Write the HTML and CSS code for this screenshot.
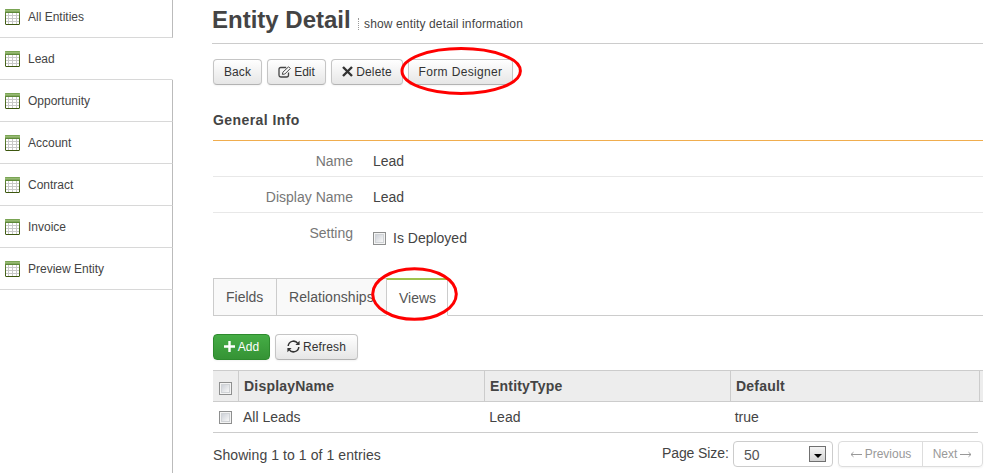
FILE: index.html
```
<!DOCTYPE html>
<html lang="en">
<head>
<meta charset="utf-8">
<title>Entity Detail</title>
<link rel="stylesheet" href="styles.css">
</head>
<body>
<svg class="defs" width="0" height="0">
  <defs>
    <linearGradient id="bar" x1="0" y1="0" x2="0" y2="1"><stop offset="0" stop-color="#6b9a45"/><stop offset=".45" stop-color="#9fc07c"/><stop offset="1" stop-color="#4c7a26"/></linearGradient>
    <linearGradient id="frame" x1="0" y1="0" x2="0" y2="1"><stop offset="0" stop-color="#6f9448"/><stop offset="1" stop-color="#3c560e"/></linearGradient>
    <symbol id="grid" viewBox="0 0 15 16">
      <rect x=".5" y=".5" width="14" height="15" rx=".5" fill="#fff" stroke="url(#frame)"/>
      <path d="M1 6.5H14M1 9.5H14M1 12.5H14M3.5 4V15M7.5 4V15M11.5 4V15" stroke="#c9c9c9" fill="none"/>
      <rect width="15" height="4" rx=".7" fill="url(#bar)"/>
    </symbol>
  </defs>
</svg>
<div class="page">
  <nav class="sidebar">
    <a class="item first"><svg class="grid-icon"><use href="#grid"/></svg>All Entities</a>
    <a class="item active"><svg class="grid-icon"><use href="#grid"/></svg>Lead</a>
    <a class="item"><svg class="grid-icon"><use href="#grid"/></svg>Opportunity</a>
    <a class="item"><svg class="grid-icon"><use href="#grid"/></svg>Account</a>
    <a class="item"><svg class="grid-icon"><use href="#grid"/></svg>Contract</a>
    <a class="item"><svg class="grid-icon"><use href="#grid"/></svg>Invoice</a>
    <a class="item"><svg class="grid-icon"><use href="#grid"/></svg>Preview Entity</a>
    <div class="rest"></div>
  </nav>
  <main class="main">
    <header class="title"><h1>Entity Detail</h1><small>show entity detail information</small></header>
    <div class="toolbar">
      <button class="btn back">Back</button>
      <button class="btn edit"><svg width="13" height="12" viewBox="0 0 13 12" fill="none" stroke="#444"><path d="M8.2 1.5H2.8Q1 1.5 1 3.2V9.2Q1 11 2.8 11H8.6Q10.5 11 10.5 9.2V6.6" stroke-width="1.3"/><path d="M4.4 8.4L4.9 6.2L10.6 .8L12.3 2.5L6.8 8Z" stroke-width="1" fill="#fff"/></svg>Edit</button>
      <button class="btn delete"><svg width="11" height="11" viewBox="0 0 11 11"><path d="M1 1L10 10M10 1L1 10" stroke="#333" stroke-width="2.4"/></svg>Delete</button>
      <div class="marked"><button class="btn designer">Form Designer</button><svg class="ring ring-designer" viewBox="0 0 122 48"><ellipse cx="61.2" cy="24" rx="59.2" ry="22.5"/></svg></div>
    </div>
    <h2>General Info</h2>
    <div class="info">
      <div class="row"><label>Name</label><span>Lead</span></div>
      <div class="row"><label>Display Name</label><span>Lead</span></div>
      <div class="row setting"><label>Setting</label><div class="check"><i class="box"></i><span>Is Deployed</span></div></div>
    </div>
    <div class="tabs">
      <a class="tab fields">Fields</a><a class="tab relations">Relationships</a><a class="tab views"><span>Views</span><svg class="ring ring-views" viewBox="0 0 88 54"><ellipse cx="44.5" cy="27" rx="41.8" ry="25.3"/></svg></a>
    </div>
    <div class="toolbar actions">
      <button class="btn add"><svg width="11" height="11" viewBox="0 0 11 11"><path d="M5.5 0V11M0 5.5H11" stroke="#fff" stroke-width="2.4"/></svg>Add</button>
      <button class="btn refresh"><svg width="13" height="13" viewBox="0 0 13 13"><path d="M1.2 6A5.3 5.3 0 0 1 10.8 3.4M11.8 7A5.3 5.3 0 0 1 2.2 9.6" fill="none" stroke="#333" stroke-width="1.5"/><path d="M12.6 .8V5H8.4ZM.4 12.2V8H4.6Z" fill="#333"/></svg>Refresh</button>
    </div>
    <div class="table">
      <div class="thead"><span class="cell pick"><i class="box"></i></span><span class="cell">DisplayName</span><span class="cell">EntityType</span><span class="cell last">Default</span></div>
      <div class="trow"><span class="cell pick"><i class="box"></i></span><span class="cell">All Leads</span><span class="cell">Lead</span><span class="cell last">true</span></div>
    </div>
    <footer class="footer">
      <span class="showing">Showing 1 to 1 of 1 entries</span>
      <span class="size">Page Size:</span>
      <div class="select"><span>50</span><i class="drop"></i></div>
      <div class="pager"><a class="prev"><svg width="12" height="7" viewBox="0 0 12 7"><path d="M12 3.5H1M3.5 1.2L1 3.5L3.5 5.8"/></svg><span>Previous</span></a><a class="next"><span>Next</span><svg width="12" height="7" viewBox="0 0 12 7"><path d="M0 3.5H11M8.5 1.2L11 3.5L8.5 5.8"/></svg></a></div>
    </footer>
  </main>
</div>
</body>
</html>
```
FILE: styles.css
```
* { box-sizing: border-box; }
body { margin: 0; background: #fff; color: #444; font: 14px/20px "Liberation Sans", Arial, sans-serif; overflow: hidden; }
.defs { display: block; height: 0; }
.page { display: flex; height: 473px; }
.sidebar { width: 173px; display: flex; flex-direction: column; flex: none; }
.item { height: 42px; display: flex; align-items: center; padding: 0 0 0 5px; border-bottom: 1px solid #d8d8d8; border-right: 1px solid #bbb; font-size: 12px; line-height: 16px; }
.first { height: 38px; padding-bottom: 3px; }
.item.active { border-right-color: transparent; }
.grid-icon { width: 15px; height: 16px; margin-right: 8px; flex: none; }
.rest { flex: 1; border-right: 1px solid #bbb; }
.main { width: 771px; margin-left: 39px; }
.title { height: 44px; border-bottom: 1px solid #ccc; display: flex; }
h1 { margin: 0; font-size: 24px; line-height: 40px; width: 146px; white-space: nowrap; }
small { font-size: 12px; height: 12px; margin-top: 18px; padding-left: 5px; border-left: 1px dotted #999; line-height: 12px; letter-spacing: .14px; white-space: nowrap; }
.toolbar { display: flex; gap: 5px; margin: 15px 0 0 1px; height: 27px; }
.btn { height: 26px; padding: 0; margin: 0; display: flex; align-items: center; justify-content: center; gap: 3px; font: 12px/16px "Liberation Sans", Arial, sans-serif; color: #333; border: 1px solid #c5c5c5; border-bottom-color: #b3b3b3; border-radius: 4px; background: linear-gradient(#fff, #e6e6e6); box-shadow: 0 1px 2px rgba(0,0,0,.05); white-space: nowrap; }
.back { width: 49px; letter-spacing: .1px; }
.edit { width: 59px; }
.delete { width: 72px; letter-spacing: .15px; }
.btn svg { margin-bottom: 1px; }
.designer { width: 105px; letter-spacing: .35px; }
.marked { position: relative; }
.ring { position: absolute; fill: none; stroke: #f00; stroke-width: 3; z-index: 2; overflow: visible; }
.ring-designer { width: 122px; height: 48px; left: -8px; top: -12px; }
h2 { margin: 24px 0 0 1px; font-size: 14px; line-height: 21px; height: 31px; border-bottom: 1px solid #f0ad4e; letter-spacing: .42px; }
.info { margin-left: 1px; }
.row { height: 36px; display: flex; border-bottom: 1px solid #e8e8e8; line-height: 40px; }
.row label { width: 140px; text-align: right; color: #777; margin-right: 20px; }
.setting { height: 65px; border: 0; }
.check { display: flex; gap: 7px; height: 20px; line-height: 20px; margin-top: 15px; align-items: center; }
.box { display: block; width: 13px; height: 13px; border: 1px solid #8e8f8f; background: linear-gradient(135deg, #c2c7d0, #f6f6f6 80%); box-shadow: inset 0 0 0 1px #f4f4f4, inset 0 0 0 2px #d0d3d6; flex: none; }
.tabs { margin-left: 1px; height: 38px; display: flex; background: linear-gradient(#ccc, #ccc) bottom / 100% 1px no-repeat; }
.tab { height: 38px; border: 1px solid #ccc; border-right: 0; background: #f9f9f9; color: #555; line-height: 37px; padding-left: 12px; }
.fields { width: 63px; }
.relations { width: 110px; letter-spacing: .05px; }
.tab.views { width: 62px; background: #fff; border-right: 1px solid #ccc; border-bottom-color: #fff; border-top: 2px solid #9fc24d; position: relative; }
.ring-views { width: 88px; height: 54px; left: -17px; top: -13px; }
.actions { margin-top: 18px; }
.add { width: 57px; color: #fff; background: linear-gradient(#45ad45, #359335); border-color: #2d8a2d; }
.refresh { width: 83px; letter-spacing: .15px; }
.table { margin: 9px 0 0 1px; }
.thead, .trow { display: flex; line-height: 31px; }
.thead { height: 32px; background: #ededed; border-top: 1px solid #ccc; border-bottom: 1px solid #ccc; font-weight: bold; }
.trow { width: 765px; height: 31px; border-bottom: 1px solid #ccc; }
.cell { width: 246px; padding-left: 5px; }
.thead .cell { border-right: 1px solid #ccc; letter-spacing: .2px; }
.thead .cell { line-height: 30px; }
.cell.pick { width: 26px; padding: 11px 0 0 6px; }
.trow .pick { padding-top: 9px; }
.cell.last { width: 249px; }
.trow .cell { padding-left: 4px; }
.trow .cell:nth-child(n+3) { padding-left: 5px; }
.trow .cell.pick { padding-left: 6px; }
.footer { margin-left: 1px; padding-top: 8px; display: flex; height: 40px; }
.showing { width: 449px; line-height: 28px; letter-spacing: .08px; }
.size { width: 71px; line-height: 25px; white-space: nowrap; letter-spacing: -.1px; }
.select { width: 100px; height: 26px; border: 1px solid #ccc; border-radius: 4px; display: flex; justify-content: space-between; line-height: 27px; padding: 4px 6px 0 10px; color: #555; }
.select span { margin-top: -4px; }
.drop { width: 17px; height: 16px; border: 1px solid #707070; background: linear-gradient(#f4f4f4, #d4d4d4); display: flex; justify-content: center; align-items: center; }
.drop::after { content: ""; border: 4px solid transparent; border-top-color: #000; border-bottom: 0; margin-top: 3px; }
.pager { margin-left: 5px; width: 145px; height: 26px; border: 1px solid #ddd; border-radius: 4px; display: flex; font-size: 12px; line-height: 24px; color: #999; box-shadow: 0 1px 2px rgba(0,0,0,.05); }
.pager a { display: flex; align-items: center; justify-content: center; gap: 3px; }
.pager svg { fill: none; stroke: #999; margin-top: 1px; }
.prev { width: 84px; border-right: 1px solid #ddd; }
.next { width: 59px; }
```
